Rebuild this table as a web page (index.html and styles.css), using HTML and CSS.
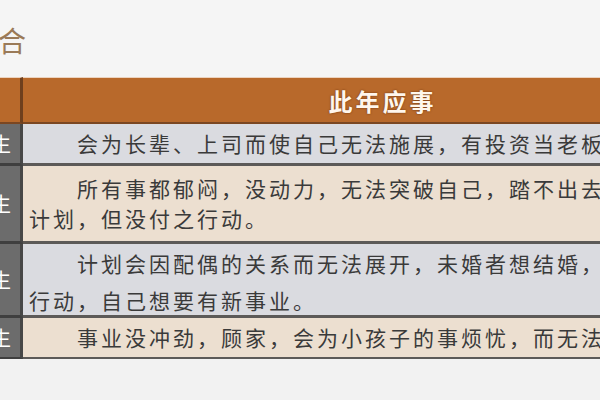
FILE: index.html
```html
<!DOCTYPE html>
<html lang="zh">
<head>
<meta charset="utf-8">
<link rel="stylesheet" href="styles.css">
</head>
<body>
<div class="page">
  <div class="title">组合</div>
  <div class="table">
    <div class="hlabel"></div>
    <div class="hcell">此年应事</div>

    <div class="label row1">年生</div>
    <div class="cell gray row1"><div class="line indent">会为长辈、上司而使自己无法施展，有投资当老板的想法。</div></div>

    <div class="label row2">年生</div>
    <div class="cell beige row2">
      <div class="line indent">所有事都郁闷，没动力，无法突破自己，踏不出去做</div>
      <div class="line">计划，但没付之行动。</div>
    </div>

    <div class="label row3">年生</div>
    <div class="cell gray row3">
      <div class="line indent">计划会因配偶的关系而无法展开，未婚者想结婚，付诸</div>
      <div class="line">行动，自己想要有新事业。</div>
    </div>

    <div class="label row4 last">年生</div>
    <div class="cell beige row4 last"><div class="line indent">事业没冲劲，顾家，会为小孩子的事烦忧，而无法专心。</div></div>
  </div>
</div>
</body>
</html>
```

FILE: styles.css
```css
*, *::before, *::after {
  box-sizing: border-box;
}

html, body {
  margin: 0;
  padding: 0;
  background: #f2f2f2;
}

.page {
  width: 600px;
  height: 400px;
  overflow: hidden;
  background: #f2f2f2;
  font-family: "Noto Sans CJK SC", "Noto Sans", sans-serif;
}

.title {
  height: 77px;
  padding-top: 22px;
  font-size: 28px;
  line-height: 36px;
  color: #9a7a58;
  text-indent: -30px;
  white-space: nowrap;
  background: #f5f5f5;
}

.table {
  display: grid;
  grid-template-columns: 70px 719px;
  margin-left: -47px;
}

.hlabel,
.hcell {
  height: 47px;
  background: #b8692b;
  border-top: 1px solid #ecd3bf;
  border-bottom: 2px solid #7b4722;
}

.hlabel {
  border-right: 3px solid #6e3f1d;
}

.hcell {
  display: flex;
  align-items: center;
  justify-content: center;
  color: #fff6ec;
  font-size: 24px;
  font-weight: 700;
  letter-spacing: 3px;
  text-shadow: 0 0 2px rgba(90, 40, 10, 0.9);
}

.label {
  display: flex;
  align-items: center;
  justify-content: flex-end;
  padding-right: 9px;
  background: #6c6c6c;
  color: #ffffff;
  font-size: 20px;
  border-right: 3px solid #474747;
  border-bottom: 3px solid #3f3f3f;
}

.cell {
  padding-left: 6px;
  color: #3a3a3a;
  font-size: 21px;
  letter-spacing: 3px;
  white-space: nowrap;
  border-bottom: 3px solid #5c5a58;
}

.gray { background: #dadbe0; }
.beige { background: #ecdfd0; }

.line { line-height: 39px; }
.indent { text-indent: 48px; }

.row1 { height: 42px; }
.row1 .line { line-height: 39px; }

.row2 { height: 78px; }
.cell.row2 { padding-top: 7px; }
.row2 .line { line-height: 30px; }

.row3 { height: 74px; }
.cell.row3 { padding-top: 1px; }
.row3 .line { line-height: 37px; }

.row4 { height: 41px; }
.row4.last { border-bottom-width: 2px; }
```
